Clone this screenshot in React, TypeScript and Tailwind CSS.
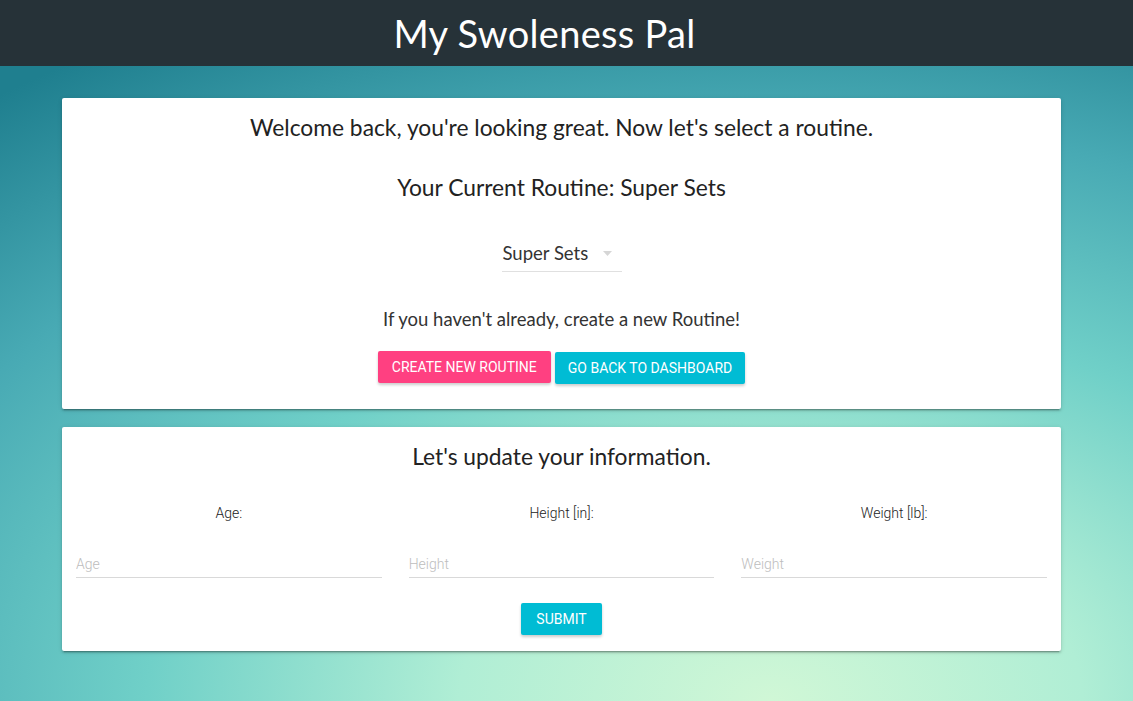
import React from 'react';

function Card({ children, className = '' }: { children: React.ReactNode; className?: string }) {
  return (
    <div className={`bg-white rounded-[2px] shadow-[0_2px_2px_0_rgba(0,0,0,0.14),0_1px_5px_0_rgba(0,0,0,0.12),0_3px_1px_-2px_rgba(0,0,0,0.2)] ${className}`}>
      {children}
    </div>
  );
}

const heading = "font-['Lato',sans-serif] text-[#222] text-[22.8px] leading-[30px] text-center";

function Field({ label, placeholder }: { label: string; placeholder: string }) {
  return (
    <div className="flex flex-col">
      <div className="text-center text-[14px] text-[#222] font-['Roboto',sans-serif] font-light leading-5">{label}</div>
      <input
        placeholder={placeholder}
        className="mt-[29px] h-[26px] border-b border-[#d9d9d9] outline-none text-[14px] font-['Roboto',sans-serif] font-light placeholder:text-[#bdbdbd] pb-[2px]"
      />
    </div>
  );
}

export default function App() {
  return (
    <div className="min-h-[701px] w-full bg-[radial-gradient(ellipse_110%_110%_at_68%_100%,#d0f7d6_0%,#b0eed5_25%,#70d0c8_50%,#48aab4_75%,#1f7f8f_100%)] font-['Lato',sans-serif]">
      <nav className="h-[66px] bg-[#263238] flex items-center justify-center pr-[44px]">
        <h1 className="text-white text-[38px] leading-none font-['Lato',sans-serif] tracking-[0.3px]">My Swoleness Pal</h1>
      </nav>

      <div className="px-[62px] pt-[32px] pb-[50px] flex flex-col gap-[18px] w-[1123px]">
        <Card className="pt-[14px] pb-[25px] flex flex-col items-center">
          <p className={heading}>Welcome back, you're looking great. Now let's select a routine.</p>
          <p className={`${heading} mt-[30px]`}>Your Current Routine: Super Sets</p>
          <div className="mt-[39px] w-[120px] border-b border-[#e0e0e0] flex items-center justify-between pb-[6px] pl-[1px] pr-[10px]">
            <span className="text-[18.5px] text-[#333] leading-6">Super Sets</span>
            <svg width="9" height="5" viewBox="0 0 9 5"><path d="M0 0h9L4.5 5z" fill="#d6d6d6" /></svg>
          </div>
          <p className="mt-[35px] text-[18.5px] leading-6 text-[#333]">If you haven't already, create a new Routine!</p>
          <div className="mt-[20px] flex gap-[4px]">
            <button className="h-[32px] px-[14px] bg-[#ff4081] text-white text-[14px] uppercase rounded-[2px] font-['Roboto',sans-serif] shadow-[0_2px_3px_rgba(0,0,0,0.2)]">Create new routine</button>
            <button className="h-[32px] px-[13px] mt-[1px] bg-[#00bcd4] text-white text-[14px] uppercase rounded-[2px] font-['Roboto',sans-serif] shadow-[0_2px_3px_rgba(0,0,0,0.2)]">Go back to dashboard</button>
          </div>
        </Card>

        <Card className="pt-[14px] pb-[16px] px-[14px] flex flex-col items-center">
          <p className={heading}>Let's update your information.</p>
          <div className="mt-[32px] grid grid-cols-3 gap-x-[27px] w-full">
            <Field label="Age:" placeholder="Age" />
            <Field label="Height [in]:" placeholder="Height" />
            <Field label="Weight [lb]:" placeholder="Weight" />
          </div>
          <button className="mt-[25px] h-[32px] px-[15px] bg-[#00bcd4] text-white text-[14px] uppercase rounded-[2px] font-['Roboto',sans-serif] shadow-[0_2px_3px_rgba(0,0,0,0.2)]">Submit</button>
        </Card>
      </div>
    </div>
  );
}
